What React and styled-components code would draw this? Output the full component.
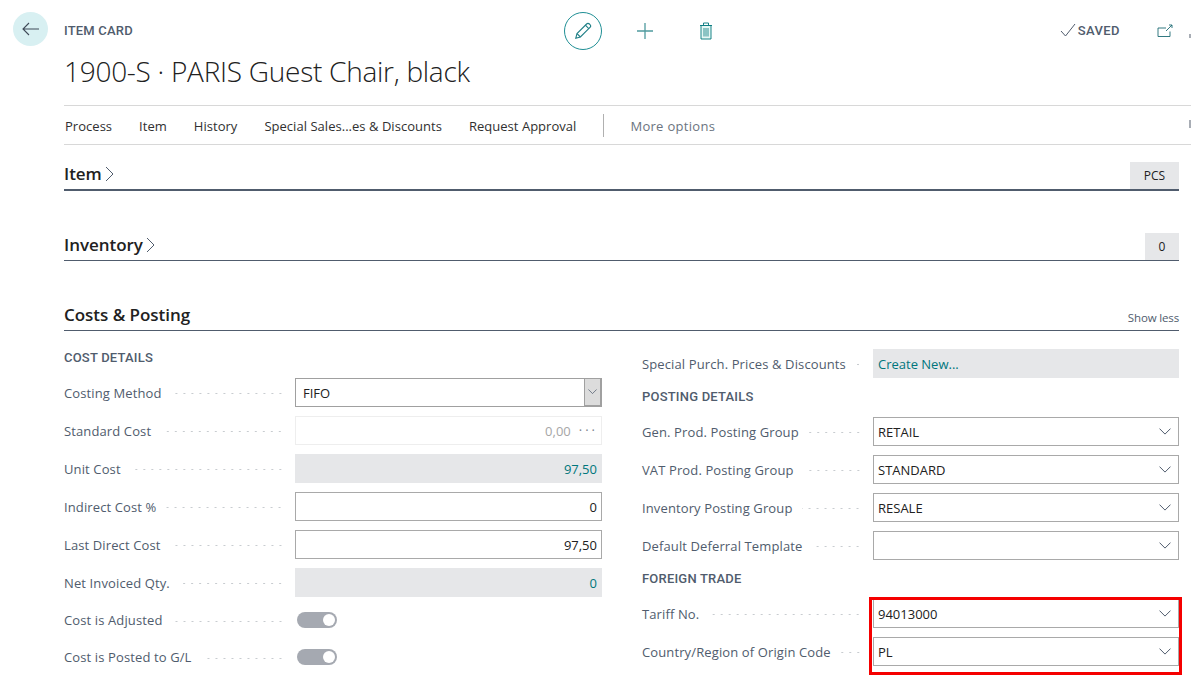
import React from 'react';
import styled, { createGlobalStyle } from 'styled-components';

const GlobalStyle = createGlobalStyle`
html, body {
    margin: 0;
    padding: 0;
    background: #fff;
    overflow: hidden;
}
body {
    font-family: "Open Sans", "Noto Sans", sans-serif;
    font-size: 13px;
    letter-spacing: 0;
    color: #212121;
}
`;

const Page = styled.div`
display: grid;
grid-template-columns: 64px 1fr;
width: 1191px;
height: 698px;
overflow: hidden;
`;

const BackCol = styled.div`
padding: 12px 0 0 12px;
`;

const BackButton = styled.div`
width: 35px;
height: 34px;
margin-left: 1px;
border-radius: 50%;
background: #d8f0f2;
display: flex;
align-items: center;
justify-content: center;
`;

const Main = styled.div`
min-width: 0;
`;

const TopBar = styled.div`
height: 105px;
border-bottom: 1px solid #d8d8d8;
`;

const TopRow = styled.div`
display: flex;
align-items: center;
height: 38px;
padding: 12px 0 0;
`;

const Caption = styled.div`
width: 500px;
font-family: Roboto, sans-serif;
font-weight: 500;
font-size: 13px;
letter-spacing: 0.2px;
color: #505c6d;
margin-top: -2px;
`;

const EditButton = styled.div`
width: 36px;
height: 36px;
border: 1px solid #1f8f95;
border-radius: 50%;
display: flex;
align-items: center;
justify-content: center;
`;

const IconSlot = styled.div`
display: flex;
align-items: center;
justify-content: center;
width: 24px;
height: 24px;
margin-left: ${(p) => p.$gap}px;
`;

const Saved = styled.div`
display: flex;
align-items: center;
gap: 2px;
margin-left: auto;
margin-top: -2px;
font-family: Roboto, sans-serif;
font-weight: 500;
font-size: 13px;
letter-spacing: 0.4px;
color: #505c6d;
`;

const CutMark = styled.div`
width: 2px;
height: 4px;
margin-left: 12px;
margin-top: 10px;
background: #a8adb5;
`;

const Title = styled.h1`
margin: -1px 0 0;
font-weight: 300;
font-size: 28px;
line-height: 44px;
letter-spacing: -0.27px;
color: #212121;
`;

const Nav = styled.div`
display: flex;
align-items: center;
height: 38px;
padding-left: 1px;
border-bottom: 1px solid #d8d8d8;
`;

const NavItem = styled.div`
margin-right: 27px;
padding-top: 2px;
letter-spacing: ${(p) => (p.$muted ? '0.3px' : '0.03px')};
color: ${(p) => (p.$muted ? '#6b7480' : '#303030')};
white-space: nowrap;
`;

const NavDivider = styled.div`
width: 1px;
height: 23px;
background: #b0b0b0;
margin: 1px 26px 0 0;
`;

const NavCut = styled.div`
width: 2px;
height: 8px;
margin: -2px 0 0 auto;
background: #a8adb5;
`;

const Sections = styled.div`
margin-right: 12px;
`;

const SectionHead = styled.div`
display: flex;
align-items: flex-end;
justify-content: space-between;
height: ${(p) => p.$height}px;
margin-top: ${(p) => p.$top}px;
border-bottom: ${(p) => p.$line}px solid #505c6d;
`;

const SectionTitle = styled.div`
display: flex;
align-items: center;
gap: 3px;
font-size: 17px;
font-weight: 600;
letter-spacing: -0.03px;
line-height: 24px;
padding-bottom: 3px;
color: #212121;
`;

const Badge = styled.div`
width: ${(p) => p.$width}px;
height: 27px;
background: #e6e7e9;
display: flex;
align-items: center;
justify-content: center;
font-size: 12px;
color: #212121;
`;

const ShowLess = styled.div`
font-size: 11.5px;
letter-spacing: -0.15px;
color: #505c6d;
padding-bottom: 5px;
`;

const Columns = styled.div`
display: grid;
grid-template-columns: 538px 537px;
column-gap: 40px;
align-items: start;
`;

const Column = styled.div`
position: relative;
padding-top: ${(p) => p.$top}px;
`;

const GroupTitle = styled.div`
height: 26px;
line-height: 28px;
margin-bottom: 4px;
font-family: Roboto, sans-serif;
font-weight: 500;
font-size: 13px;
letter-spacing: 0.2px;
color: #505c6d;
`;

const Row = styled.div`
display: grid;
grid-template-columns: 231px 1fr;
height: 38px;
box-sizing: border-box;
padding: 4px 0 5px;
align-items: center;
`;

const ToggleGroup = styled.div`
display: grid;
row-gap: 1px;
`;

const ToggleRow = styled(Row)`
height: 36px;
padding: 0;
`;

const LabelCell = styled.div`
display: flex;
align-items: center;
min-width: 0;
padding-right: 11px;
`;

const Label = styled.span`
color: #505c6d;
letter-spacing: 0.12px;
white-space: nowrap;
`;

const Leader = styled.span`
flex: 1;
height: 3px;
margin: 2px 0 0 10px;
background-image: radial-gradient(circle at center, #c8ccd0 0.9px, transparent 1.1px);
background-size: 8px 3px;
background-repeat: repeat-x;
background-position: right center;
`;

const Field = styled.div`
display: flex;
align-items: center;
justify-content: ${(p) => (p.$right ? 'flex-end' : 'space-between')};
height: 29px;
box-sizing: border-box;
padding: 0 ${(p) => (p.$select ? '7px' : '4px')} 0 4px;
border: 1px solid #a9a9a9;
background: #fff;
color: #212121;
`;

const ChevronSlot = styled.span`
display: flex;
margin-top: 1px;
`;

const ReadOnly = styled.div`
display: flex;
align-items: center;
justify-content: ${(p) => (p.$right ? 'flex-end' : 'flex-start')};
height: 29px;
padding: 0 5px;
background: #e6e7e9;
color: #00767c;
`;

const DisabledField = styled.div`
display: flex;
align-items: center;
justify-content: flex-end;
gap: 8px;
height: 29px;
box-sizing: border-box;
padding: 0 6px;
border: 1px solid #eeeeee;
color: #a6a6a6;
`;

const Dots = styled.span`
letter-spacing: 3px;
margin-right: -3px;
color: #7d8590;
line-height: 1;
`;

const ComboField = styled.div`
display: flex;
align-items: stretch;
justify-content: space-between;
height: 29px;
box-sizing: border-box;
padding-left: 7px;
border: 1px solid #a0a0a0;
`;

const ComboText = styled.span`
align-self: center;
`;

const ComboButton = styled.div`
display: flex;
align-items: center;
justify-content: center;
width: 15px;
background: #dcdcdc;
border-left: 1px solid #a0a0a0;
border-right: 1px solid #a0a0a0;
border-bottom: 1px solid #a0a0a0;
`;

const Toggle = styled.div`
position: relative;
width: 40px;
height: 16px;
margin-left: 2px;
border-radius: 8px;
background: #a5a9b1;
`;

const Knob = styled.div`
position: absolute;
top: 2px;
right: 2px;
width: 12px;
height: 12px;
border-radius: 50%;
background: #fff;
`;

const Highlight = styled.div`
position: absolute;
right: -3px;
bottom: -4px;
width: 307px;
height: 72px;
border: 3px solid #f50000;
pointer-events: none;
`;

const ArrowIcon = () => (
    <svg width="17" height="14" viewBox="0 0 17 14" fill="none" stroke="#3f4a58" strokeWidth="1.1">
        <path d="M17 7H1M7 1L1 7L7 13" />
    </svg>
);

const PencilIcon = () => (
    <svg width="18" height="18" viewBox="0 0 18 18" fill="none" stroke="#1f7f86" strokeWidth="1.1">
        <path d="M1.8 16.2L3 11.6L12.6 2C13.4 1.2 14.6 1.2 15.4 2L16 2.6C16.8 3.4 16.8 4.6 16 5.4L6.4 15L1.8 16.2Z" />
        <path d="M3 11.6L6.4 15M11.4 3.2L14.8 6.6" />
    </svg>
);

const PlusIcon = () => (
    <svg width="18" height="18" viewBox="0 0 18 18" fill="none" stroke="#4f9a9e" strokeWidth="1.3">
        <path d="M1 9H17M9 1V17" />
    </svg>
);

const TrashIcon = () => (
    <svg width="14" height="18" viewBox="0 0 14 18" fill="none" stroke="#00767c" strokeWidth="0.9">
        <path d="M1 3.5H13M4.5 3.5V1H9.5V3.5" />
        <path d="M2 3.5V17H12V3.5H2Z" fill="#e6f7f4" />
        <path d="M5 6V14.5M7 6V14.5M9 6V14.5" strokeWidth="0.8" />
    </svg>
);

const CheckIcon = () => (
    <svg width="16" height="14" viewBox="0 0 16 14" fill="none" stroke="#505c6d" strokeWidth="1">
        <path d="M1 8L5.5 13L15 1" />
    </svg>
);

const OpenIcon = () => (
    <svg width="16" height="14" viewBox="0 0 16 14" fill="none" stroke="#1d6b74" strokeWidth="0.9">
        <path d="M9 4H1V12.5H13V7.5" />
        <path d="M9 7L15 1M12 1H15V4" />
    </svg>
);

const Chevron = ({ size = 12, color = '#505c6d' }) => (
    <svg width={size} height={size * 0.6} viewBox="0 0 12 7" fill="none" stroke={color} strokeWidth="1">
        <path d="M0.5 0.5L6 6L11.5 0.5" />
    </svg>
);

const HeadChevron = () => (
    <svg width="9" height="16" viewBox="0 0 9 16" fill="none" stroke="#505c6d" strokeWidth="1">
        <path d="M1 1L8 8L1 15" />
    </svg>
);

const Line = ({ text }) => (
    <LabelCell>
        <Label>{text}</Label>
        <Leader />
    </LabelCell>
);

const SelectRow = ({ label, value }) => (
    <Row>
        <Line text={label} />
        <Field $select>
            <span>{value}</span>
            <ChevronSlot><Chevron /></ChevronSlot>
        </Field>
    </Row>
);

const NumberRow = ({ label, value }) => (
    <Row>
        <Line text={label} />
        <Field $right>{value}</Field>
    </Row>
);

const ReadRow = ({ label, value, right }) => (
    <Row>
        <Line text={label} />
        <ReadOnly $right={right}>{value}</ReadOnly>
    </Row>
);

const SwitchRow = ({ label }) => (
    <ToggleRow>
        <Line text={label} />
        <Toggle><Knob /></Toggle>
    </ToggleRow>
);

const navItems = ['Process', 'Item', 'History', 'Special Sales...es & Discounts', 'Request Approval'];

export default function App() {
    return (
        <Page>
            <GlobalStyle />
            <BackCol>
                <BackButton><ArrowIcon /></BackButton>
            </BackCol>
            <Main>
                <TopBar>
                    <TopRow>
                        <Caption>ITEM CARD</Caption>
                        <EditButton><PencilIcon /></EditButton>
                        <IconSlot $gap={31}><PlusIcon /></IconSlot>
                        <IconSlot $gap={37}><TrashIcon /></IconSlot>
                        <Saved><CheckIcon />SAVED</Saved>
                        <IconSlot $gap={33}><OpenIcon /></IconSlot>
                        <CutMark />
                    </TopRow>
                    <Title>1900-S · PARIS Guest Chair, black</Title>
                </TopBar>
                <Nav>
                    {navItems.map((item) => <NavItem key={item}>{item}</NavItem>)}
                    <NavDivider />
                    <NavItem $muted>More options</NavItem>
                    <NavCut />
                </Nav>
                <Sections>
                    <SectionHead $top={17} $height={27} $line={2}>
                        <SectionTitle>Item <HeadChevron /></SectionTitle>
                        <Badge $width={49}>PCS</Badge>
                    </SectionHead>
                    <SectionHead $top={42} $height={27} $line={1}>
                        <SectionTitle>Inventory <HeadChevron /></SectionTitle>
                        <Badge $width={34}>0</Badge>
                    </SectionHead>
                    <SectionHead $top={40} $height={29} $line={1}>
                        <SectionTitle>Costs &amp; Posting</SectionTitle>
                        <ShowLess>Show less</ShowLess>
                    </SectionHead>
                    <Columns>
                        <Column $top={13}>
                            <GroupTitle>COST DETAILS</GroupTitle>
                            <Row>
                                <Line text="Costing Method" />
                                <ComboField>
                                    <ComboText>FIFO</ComboText>
                                    <ComboButton><Chevron size={9} /></ComboButton>
                                </ComboField>
                            </Row>
                            <Row>
                                <Line text="Standard Cost" />
                                <DisabledField>0,00 <Dots>···</Dots></DisabledField>
                            </Row>
                            <ReadRow label="Unit Cost" value="97,50" right />
                            <NumberRow label="Indirect Cost %" value="0" />
                            <NumberRow label="Last Direct Cost" value="97,50" />
                            <ReadRow label="Net Invoiced Qty." value="0" right />
                            <ToggleGroup>
                                <SwitchRow label="Cost is Adjusted" />
                                <SwitchRow label="Cost is Posted to G/L" />
                            </ToggleGroup>
                        </Column>
                        <Column $top={14}>
                            <ReadRow label="Special Purch. Prices & Discounts" value="Create New..." />
                            <GroupTitle>POSTING DETAILS</GroupTitle>
                            <SelectRow label="Gen. Prod. Posting Group" value="RETAIL" />
                            <SelectRow label="VAT Prod. Posting Group" value="STANDARD" />
                            <SelectRow label="Inventory Posting Group" value="RESALE" />
                            <SelectRow label="Default Deferral Template" value="" />
                            <GroupTitle>FOREIGN TRADE</GroupTitle>
                            <SelectRow label="Tariff No." value="94013000" />
                            <SelectRow label="Country/Region of Origin Code" value="PL" />
                            <Highlight />
                        </Column>
                    </Columns>
                </Sections>
            </Main>
        </Page>
    );
}
